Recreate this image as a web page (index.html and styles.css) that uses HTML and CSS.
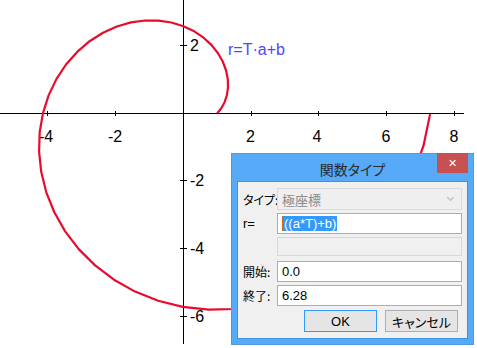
FILE: index.html
```html
<!DOCTYPE html>
<html lang="ja">
<head>
<meta charset="utf-8">
<link rel="stylesheet" href="styles.css">
</head>
<body>
<svg class="graph" width="477" height="348" viewBox="0 0 477 348">
  <g class="axes">
    <line x1="0" y1="113.5" x2="464" y2="113.5"/>
    <line x1="183.5" y1="0" x2="183.5" y2="344"/>
    <line x1="47.5" y1="111" x2="47.5" y2="116"/>
    <line x1="115.5" y1="111" x2="115.5" y2="116"/>
    <line x1="251.5" y1="111" x2="251.5" y2="116"/>
    <line x1="318.5" y1="111" x2="318.5" y2="116"/>
    <line x1="386.5" y1="111" x2="386.5" y2="116"/>
    <line x1="454.5" y1="111" x2="454.5" y2="116"/>
    <line x1="180" y1="45.5" x2="187" y2="45.5"/>
    <line x1="180" y1="180.5" x2="187" y2="180.5"/>
    <line x1="180" y1="248.5" x2="187" y2="248.5"/>
    <line x1="180" y1="316.5" x2="187" y2="316.5"/>
  </g>
  <g class="ticklabels">
    <text x="46" y="142" text-anchor="middle">-4</text>
    <text x="115" y="142" text-anchor="middle">-2</text>
    <text x="250.5" y="142" text-anchor="middle">2</text>
    <text x="317" y="142" text-anchor="middle">4</text>
    <text x="386" y="142" text-anchor="middle">6</text>
    <text x="454" y="142" text-anchor="middle">8</text>
    <text x="190" y="51">2</text>
    <text x="190" y="186">-2</text>
    <text x="190" y="254">-4</text>
    <text x="190" y="322">-6</text>
  </g>
  <text class="formula" x="228" y="55">r=T·a+b</text>
  <polyline id="curve" class="curve" points=""/>
</svg>

<div class="dialog">
  <div class="titlebar">
    <span class="title">関数タイプ</span>
  </div>
  <div class="close">✕</div>
  <div class="client">
    <div class="row row-type">
      <span class="label">タイプ:</span>
      <div class="field combo"><span>極座標</span><span class="chev"></span></div>
    </div>
    <div class="row row-r">
      <span class="label label-latin">r=</span>
      <div class="field input"><span class="sel">((a*T)+b)</span></div>
    </div>
    <div class="row row-empty">
      <span class="label"></span>
      <div class="field disabled"></div>
    </div>
    <div class="row row-start">
      <span class="label">開始:</span>
      <div class="field input">0.0</div>
    </div>
    <div class="row row-end">
      <span class="label">終了:</span>
      <div class="field input">6.28</div>
    </div>
    <div class="buttons">
      <div class="btn btn-default">OK</div>
      <div class="btn">キャンセル</div>
    </div>
  </div>
</div>
<script src="script.js"></script>
</body>
</html>
```

FILE: styles.css
```css
html, body {
  margin: 0;
  padding: 0;
  background: #ffffff;
}
body {
  position: relative;
  width: 477px;
  height: 348px;
  overflow: hidden;
  font-family: "Liberation Sans", "Noto Sans CJK JP", sans-serif;
}
.graph {
  display: block;
}
.axes line {
  stroke: #000;
  stroke-width: 1;
  shape-rendering: crispEdges;
}
.ticklabels text {
  font-family: "Liberation Sans", sans-serif;
  font-size: 16px;
  fill: #000;
}
.formula {
  font-family: "Liberation Sans", sans-serif;
  font-size: 16px;
  fill: #5046f8;
}
.curve {
  fill: none;
  stroke: #e80c2c;
  stroke-width: 2.2;
  stroke-linejoin: round;
}

.dialog {
  position: absolute;
  left: 231px;
  top: 153px;
  width: 243px;
  height: 192px;
  box-sizing: border-box;
  border: 1px solid #4a9be8;
  background: #56aaf8;
  padding: 0 5px 5px 5px;
  display: flex;
  flex-direction: column;
}
.titlebar {
  height: 27px;
  display: flex;
  align-items: center;
  justify-content: center;
}
.title {
  font-family: "Noto Sans CJK JP", sans-serif;
  font-feature-settings: "palt";
  font-size: 14px;
  color: #2b2b2b;
  line-height: 1;
  padding-top: 2px;
}
.close {
  position: absolute;
  top: -1px;
  right: 5px;
  width: 31px;
  height: 20px;
  background: #c75050;
  color: #fff;
  font-family: "DejaVu Sans", sans-serif;
  font-weight: bold;
  font-size: 11px;
  display: flex;
  align-items: center;
  justify-content: center;
}
.client {
  flex: 1;
  border: 1px solid #3e90e2;
  background: #f0f0f0;
  display: flex;
  flex-direction: column;
  padding: 6px 5px 0 5px;
}
.row {
  display: flex;
  align-items: center;
}
.label {
  width: 34px;
  flex-shrink: 0;
  white-space: nowrap;
  font-family: "Noto Sans CJK JP", sans-serif;
  font-feature-settings: "palt";
  font-size: 12px;
  color: #000;
}
.label-latin {
  font-family: "Liberation Sans", sans-serif;
  font-size: 13px;
}
.field {
  width: 185px;
  flex-shrink: 0;
  box-sizing: border-box;
  display: flex;
  align-items: center;
  padding-left: 4px;
  font-family: "Liberation Sans", sans-serif;
  font-size: 13px;
  color: #000;
}
.row-type .field { height: 22px; }
.row-r { margin-top: 3px; }
.row-r .field { height: 21px; }
.row-empty { margin-top: 3px; }
.row-empty .field { height: 19px; }
.row-start { margin-top: 5px; }
.row-start .field { height: 21px; }
.row-end { margin-top: 3px; }
.row-end .field { height: 21px; }

.combo {
  border: 1px solid #d9d9d9;
  background: #efefef;
  color: #8a8a8a;
  font-family: "Noto Sans CJK JP", sans-serif;
  font-size: 13px;
  justify-content: space-between;
  padding-right: 8px;
}
.chev {
  width: 4px;
  height: 4px;
  border-right: 1.5px solid #b4b4b4;
  border-bottom: 1.5px solid #b4b4b4;
  transform: rotate(45deg);
  margin-top: -3px;
}
.input {
  border: 1px solid #abadb3;
  background: #fff;
}
.disabled {
  border: 1px solid #d9d9d9;
  background: #f0f0f0;
}
.sel {
  background: #3399ff;
  color: #fff;
  padding: 0 1px;
  line-height: 15px;
  border-left: 1px solid #c06a1e;
}
.buttons {
  display: flex;
  justify-content: flex-end;
  gap: 8px;
  margin-top: 4px;
  padding-right: 4px;
}
.btn {
  width: 73px;
  height: 22px;
  box-sizing: border-box;
  border: 1px solid #adadad;
  background: #e5e5e5;
  display: flex;
  align-items: center;
  justify-content: center;
  font-family: "Liberation Sans", "Noto Sans CJK JP", sans-serif;
  font-feature-settings: "palt";
  font-size: 13px;
  color: #000;
}
.btn-default {
  border-color: #3399ff;
}
```

FILE: script.js
```js
(function () {
  var cx = 183.3, cy = 113.3, s = 33.9;
  var n = 48, tEnd = 6.28, pts = [];
  for (var i = 0; i <= n; i++) {
    var t = tEnd * i / n;
    var r = t + 1;
    pts.push((cx + s * r * Math.cos(t)).toFixed(1) + "," + (cy - s * r * Math.sin(t)).toFixed(1));
  }
  document.getElementById("curve").setAttribute("points", pts.join(" "));
})();
```
